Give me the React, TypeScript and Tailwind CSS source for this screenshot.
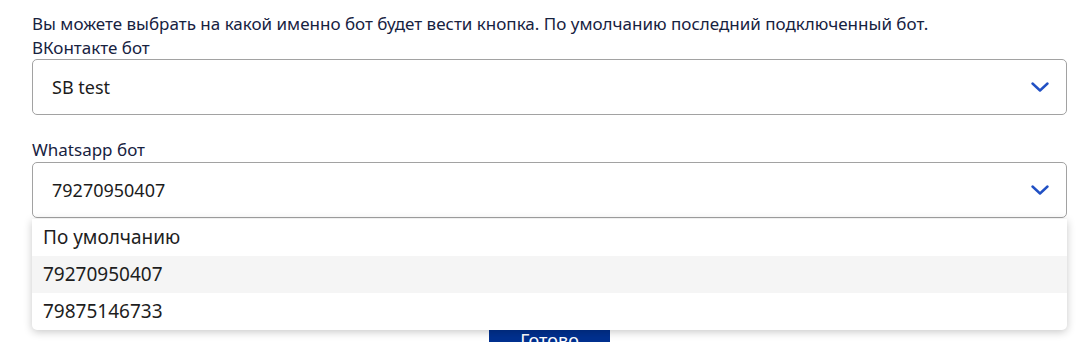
const bots = ["По умолчанию", "79270950407", "79875146733"];

function Chevron() {
    return (
        <svg width="18" height="10" viewBox="0 0 18 10" fill="none">
            <polyline points="1.5,1.5 9,8.5 16.5,1.5" stroke="#2150c4" strokeWidth="2.4" strokeLinecap="round" strokeLinejoin="round" />
        </svg>
    );
}

function SelectBox({ value }: { value: string }) {
    return (
        <div className="h-[56px] border border-[#a2a2a2] rounded-[5px] bg-white flex items-center justify-between pl-[19px] pr-[17px]">
            <span className="text-[18px] text-[#1c1c1c]">{value}</span>
            <Chevron />
        </div>
    );
}

export default function App() {
    const hovered = 1;

    return (
        <div className="w-[1092px] h-[342px] overflow-hidden bg-white font-['Noto_Sans',sans-serif]">
            <div className="ml-[32px] w-[1035px] pt-[12px]">
                <p className="text-[17px] leading-[24px] text-[#17223f]">
                    Вы можете выбрать на какой именно бот будет вести кнопка. По умолчанию последний подключенный бот.
                </p>
                <div className="text-[17px] leading-[23px] text-[#17223f]">ВКонтакте бот</div>
                <SelectBox value="SB test" />

                <div className="mt-[23px]">
                    <div className="text-[17px] leading-[24px] text-[#17223f]">Whatsapp бот</div>
                    <div className="relative">
                        <SelectBox value="79270950407" />
                        <div className="absolute left-0 right-0 top-full mt-[1px] z-10 bg-white rounded-b-[5px] shadow-[0_2px_8px_rgba(0,0,0,0.22)] overflow-hidden">
                            {bots.map((bot, i) => (
                                <div
                                    key={bot}
                                    className={`h-[37px] flex items-center px-[11px] text-[19px] text-[#1e1e1e] ${i === hovered ? "bg-[#f5f5f5]" : ""}`}
                                >
                                    {bot}
                                </div>
                            ))}
                        </div>
                    </div>
                </div>

                <div className="flex justify-center mt-[100px]">
                    <button
                        type="button"
                        className="w-[121px] py-[10px] bg-[#00308f] text-white text-[18px] leading-[24px]"
                    >
                        Готово
                    </button>
                </div>
            </div>
        </div>
    );
}
